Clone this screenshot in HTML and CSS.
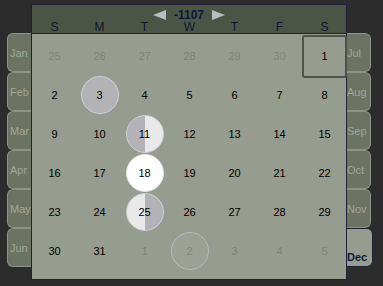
FILE: index.html
```html
<!DOCTYPE html>
<html lang="en">

<head>
    <meta charset="UTF-8">
    <title>Moon calendar</title>
    <link rel="stylesheet" href="styles.css">
</head>

<body>
    <main class="page">
        <div class="tabs left">
            <span class="tab">Jan</span>
            <span class="tab">Feb</span>
            <span class="tab">Mar</span>
            <span class="tab">Apr</span>
            <span class="tab">May</span>
            <span class="tab">Jun</span>
        </div>

        <div class="cal">
            <div class="head">
                <div class="year">
                    <svg width="13" height="10" viewBox="0 0 13 10"><path d="M13 0 L0 5 L13 10 Z" fill="#b9bdc2" /></svg>
                    <b>-1107</b>
                    <svg width="13" height="10" viewBox="0 0 13 10"><path d="M0 0 L13 5 L0 10 Z" fill="#b9bdc2" /></svg>
                </div>
                <div class="dows">
                    <span>S</span><span>M</span><span>T</span><span>W</span><span>T</span><span>F</span><span>S</span>
                </div>
            </div>

            <div class="days">
                <span class="day out">25</span>
                <span class="day out">26</span>
                <span class="day out">27</span>
                <span class="day out">28</span>
                <span class="day out">29</span>
                <span class="day out">30</span>
                <span class="day picked">1</span>

                <span class="day">2</span>
                <span class="day"><i class="moon new">3</i></span>
                <span class="day">4</span>
                <span class="day">5</span>
                <span class="day">6</span>
                <span class="day">7</span>
                <span class="day">8</span>

                <span class="day">9</span>
                <span class="day">10</span>
                <span class="day"><i class="moon first">11</i></span>
                <span class="day">12</span>
                <span class="day">13</span>
                <span class="day">14</span>
                <span class="day">15</span>

                <span class="day">16</span>
                <span class="day">17</span>
                <span class="day"><i class="moon full">18</i></span>
                <span class="day">19</span>
                <span class="day">20</span>
                <span class="day">21</span>
                <span class="day">22</span>

                <span class="day">23</span>
                <span class="day">24</span>
                <span class="day"><i class="moon last">25</i></span>
                <span class="day">26</span>
                <span class="day">27</span>
                <span class="day">28</span>
                <span class="day">29</span>

                <span class="day">30</span>
                <span class="day">31</span>
                <span class="day out">1</span>
                <span class="day out"><i class="moon ghost">2</i></span>
                <span class="day out">3</span>
                <span class="day out">4</span>
                <span class="day out">5</span>
            </div>
        </div>

        <div class="tabs right">
            <span class="tab">Jul</span>
            <span class="tab">Aug</span>
            <span class="tab">Sep</span>
            <span class="tab">Oct</span>
            <span class="tab">Nov</span>
            <span class="tab active">Dec</span>
        </div>
    </main>
</body>

</html>
```

FILE: styles.css
```css
* {
    box-sizing: border-box;
    margin: 0;
    padding: 0;
}

body {
    background-color: #2c2c2c;
    font-family: "Liberation Sans", Arial, sans-serif;
    font-size: 11px;
    width: 383px;
    height: 286px;
    overflow: hidden;
}

.page {
    display: flex;
    padding: 4px 0 0 7px;
}

.tabs {
    display: flex;
    flex-direction: column;
    flex-shrink: 0;
    width: 24px;
    margin-top: 29px;
}

.tab {
    height: 39px;
    display: flex;
    align-items: center;
    justify-content: flex-start;
    background-color: #6c7363;
    border: 1px solid #8d9387;
    color: #a1a79b;
    overflow: hidden;
    white-space: nowrap;
}

.left .tab {
    border-right: none;
    border-radius: 6px 0 0 6px;
    padding-left: 2px;
}

.right .tab {
    border-left: none;
    border-radius: 0 6px 6px 0;
}

.right .tab.active {
    width: 26px;
    background-color: #969c8f;
    border-color: #1d2236;
    color: #0f1838;
    font-weight: bold;
    align-items: flex-end;
    padding-bottom: 3px;
}

.cal {
    flex-shrink: 0;
    width: 316px;
}

.head {
    height: 30px;
    background-color: #4c5545;
    border: 1px solid #1d2236;
}

.year {
    display: flex;
    align-items: center;
    justify-content: center;
    gap: 8px;
    height: 16px;
    padding-top: 3px;
    color: #0f1838;
}

.year b {
    font-size: 12px;
}

.dows {
    display: grid;
    grid-template-columns: repeat(7, 45px);
    height: 12px;
    line-height: 12px;
    color: #0e1530;
    font-size: 12px;
}

.dows span {
    text-align: center;
}

.days {
    display: grid;
    grid-template-columns: repeat(7, 45px);
    grid-auto-rows: 39px;
    padding: 2px 0 9px;
    background-color: #969c8f;
    border: 1px solid #1d2236;
    border-top: none;
}

.day {
    position: relative;
    display: flex;
    align-items: center;
    justify-content: center;
    color: #000;
}

.day.out {
    color: #7e8479;
}

.day.picked::after {
    content: "";
    position: absolute;
    inset: -1px 0 -3px 0;
    border: 2px solid #4e524b;
    border-radius: 3px;
}

.moon {
    font-style: normal;
    width: 38px;
    height: 38px;
    border-radius: 50%;
    display: flex;
    align-items: center;
    justify-content: center;
    border: 1px solid #cfd0d8;
}

.moon.new {
    background-color: #b3b3b7;
}

.moon.first {
    background: linear-gradient(to right, #b3b3b7 50%, #e9e9ea 50%);
}

.moon.full {
    background-color: #fff;
    border-color: #e4e4e8;
}

.moon.last {
    background: linear-gradient(to right, #e9e9ea 50%, #b3b3b7 50%);
}

.moon.ghost {
    background-color: #9ca095;
    border-color: #b9bac2;
    color: #80867c;
}
```
